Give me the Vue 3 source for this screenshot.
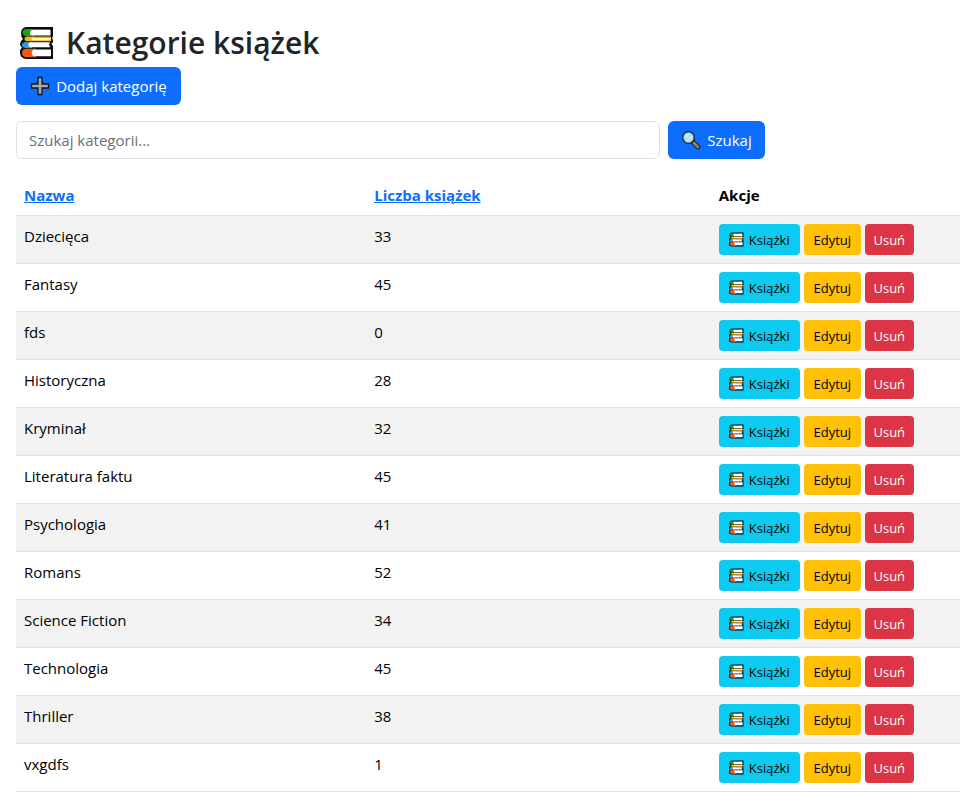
<script setup>
import { computed, ref } from 'vue'

const categories = ref([
  { name: 'Dziecięca', count: 33 },
  { name: 'Fantasy', count: 45 },
  { name: 'fds', count: 0 },
  { name: 'Historyczna', count: 28 },
  { name: 'Kryminał', count: 32 },
  { name: 'Literatura faktu', count: 45 },
  { name: 'Psychologia', count: 41 },
  { name: 'Romans', count: 52 },
  { name: 'Science Fiction', count: 34 },
  { name: 'Technologia', count: 45 },
  { name: 'Thriller', count: 38 },
  { name: 'vxgdfs', count: 1 },
])

const query = ref('')
const applied = ref('')
const sortKey = ref('name')

const visible = computed(() =>
  categories.value
    .filter((c) => c.name.toLowerCase().includes(applied.value.toLowerCase()))
    .sort((a, b) =>
      sortKey.value === 'count' ? a.count - b.count : a.name.localeCompare(b.name, 'pl')
    )
)

function remove(category) {
  categories.value = categories.value.filter((c) => c !== category)
}
</script>

<template>
  <svg class="sprite" aria-hidden="true">
    <symbol id="books" viewBox="0 0 34 32">
      <path d="M6 0H33V9.500L32 11L33 13V15L31.500 17L33 19V32H6Q0 31 0 25.500Q0 22 2 20.500Q0 19 0 17Q0 14 3 12Q1 10 1 6Q1 1 6 0Z" fill="#0d0d0d" />
      <path d="M30 2H7C3.500 2 2.500 4 2.500 5.500C2.500 7.500 4 9 7 9H14V3H30Z" fill="#16a50e" />
      <path d="M30.500 3H13C10.500 3 10 4.500 10 6C10 7.500 10.500 8.500 13 8.500H30.500Z" fill="#fff" />
      <path d="M31 9.500H8C5 9.500 4.500 11 4.500 12C4.500 13 5 14.300 8 14.300H31V13H14V10.500H31Z" fill="#f2b91c" />
      <path d="M31 10.500H13C11 10.500 11 13.300 13 13.300H31Z" fill="#fff3b8" />
      <path d="M12 15H6C3 15 2 16.500 2 18C2 19.500 3 21 6 21H12Z" fill="#3996dd" />
      <path d="M30 15.300H11C7.500 15.300 7.500 20.300 11 20.300H30.500L29 18Z" fill="#fff" />
      <path d="M16 21.700H7C3 21.700 2 24 2 26C2 28.500 3.500 30.300 7 30.300H16Z" fill="#f75712" />
      <path d="M31 22.500H15C10.500 22.500 10.500 29.300 15 29.300H31Z" fill="#fff" />
    </symbol>
  </svg>

  <main class="page">
    <h1 class="title">
      <svg class="title-icon" aria-hidden="true"><use href="#books" /></svg>
      Kategorie książek
    </h1>

    <button type="button" class="btn primary add">
      <svg class="icon" viewBox="0 0 20 20" aria-hidden="true">
        <path d="M8 1.500H12V8H18.500V12H12V18.500H8V12H1.500V8H8Z" fill="#a9a9a9" stroke="#151515" stroke-width="1.300" />
      </svg>
      Dodaj kategorię
    </button>

    <form class="search" @submit.prevent="applied = query">
      <input v-model="query" type="text" placeholder="Szukaj kategorii..." aria-label="Szukaj kategorii" />
      <button type="submit" class="btn primary find">
        <svg class="icon" viewBox="0 0 20 20" aria-hidden="true">
          <path d="M12 12L17 17" stroke="#222" stroke-width="4.600" stroke-linecap="round" />
          <path d="M13 13L17 17" stroke="#858585" stroke-width="2.600" stroke-linecap="round" />
          <circle cx="7.500" cy="7.500" r="5.800" fill="#a9d8f5" stroke="#222" stroke-width="1.300" />
          <path d="M4 8L8 4M6 11L11 6" stroke="#d5edfb" stroke-width="1.400" />
        </svg>
        Szukaj
      </button>
    </form>

    <table class="table">
      <thead>
        <tr>
          <th scope="col" class="col-name"><a href="#name" @click.prevent="sortKey = 'name'">Nazwa</a></th>
          <th scope="col" class="col-count"><a href="#count" @click.prevent="sortKey = 'count'">Liczba książek</a></th>
          <th scope="col">Akcje</th>
        </tr>
      </thead>
      <tbody>
        <tr v-for="category in visible" :key="category.name">
          <td>{{ category.name }}</td>
          <td>{{ category.count }}</td>
          <td>
            <div class="actions">
              <button type="button" class="btn small info">
                <svg class="small-icon" aria-hidden="true"><use href="#books" /></svg>
                Książki
              </button>
              <button type="button" class="btn small warning">Edytuj</button>
              <button type="button" class="btn small danger" @click="remove(category)">Usuń</button>
            </div>
          </td>
        </tr>
      </tbody>
    </table>
  </main>
</template>

<style>
body {
  margin: 0;
  background: #fff;
}
</style>

<style scoped>
.sprite {
  display: block;
  width: 0;
  height: 0;
}

.page {
  padding: 16px 0 12px 16px;
  color: #212529;
  font-family: "Segoe UI", "Open Sans", "Noto Sans", sans-serif;
  font-size: 15px;
  line-height: 24px;
}

.title {
  display: flex;
  align-items: center;
  gap: 12px;
  margin: 0 0 4px;
  padding: 6px 0 0 4px;
  font-size: 30px;
  font-weight: 600;
  line-height: 41px;
}

.title-icon {
  width: 34px;
  height: 32px;
}

.btn {
  display: inline-flex;
  align-items: center;
  justify-content: center;
  box-sizing: border-box;
  padding: 0;
  border: 0;
  border-radius: 6px;
  font: inherit;
  white-space: nowrap;
  cursor: pointer;
}

.primary {
  gap: 6px;
  height: 38px;
  background: #0d6efd;
  color: #fff;
}

.add {
  width: 165px;
}

.find {
  flex: none;
  width: 97px;
}

.icon {
  width: 20px;
  height: 20px;
}

.search {
  display: flex;
  gap: 8px;
  max-width: 749px;
  margin: 16px 0;
}

.search input {
  flex: 1;
  min-width: 0;
  height: 38px;
  box-sizing: border-box;
  padding: 0 12px;
  border: 1px solid #dee2e6;
  border-radius: 6px;
  background: #fff;
  color: #212529;
  font: inherit;
}

.search input::placeholder {
  color: #6c7075;
  opacity: 1;
}

.table {
  width: 100%;
  table-layout: fixed;
  border-collapse: separate;
  border-spacing: 0;
  color: #000;
}

.col-name {
  width: 37.1%;
}

.col-count {
  width: 36.5%;
}

.table th,
.table td {
  box-sizing: border-box;
  padding: 8px;
  border-bottom: 1px solid #dee2e6;
  text-align: left;
  vertical-align: top;
}

.table th {
  font-weight: 700;
}

.table tbody tr:nth-child(odd) {
  background: #f2f2f2;
}

.table a {
  color: #0d6efd;
  text-decoration: underline;
}

.actions {
  display: flex;
  gap: 4px;
}

.small {
  height: 31px;
  border-radius: 4px;
  font-size: 13px;
  color: #000;
}

.small-icon {
  width: 15px;
  height: 15px;
}

.info {
  gap: 5px;
  width: 81px;
  background: #0dcaf0;
}

.warning {
  width: 57px;
  background: #ffc107;
}

.danger {
  width: 49px;
  background: #dc3545;
  color: #fff;
}
</style>
